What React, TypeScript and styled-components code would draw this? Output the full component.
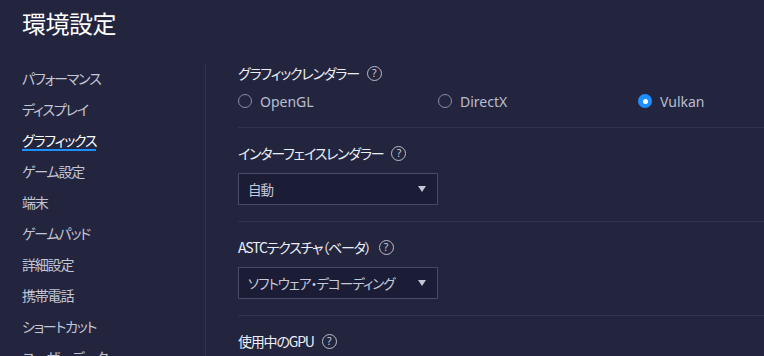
import React from "react";
import styled, { createGlobalStyle } from "styled-components";

const Global = createGlobalStyle`
  html, body { margin: 0; padding: 0; background: #23253f; overflow: hidden; }
  body { font-family: "Noto Sans", "Noto Sans CJK JP", sans-serif; font-feature-settings: "palt"; }
  * { box-sizing: border-box; }
`;

const Page = styled.div`
  width: 764px;
  height: 356px;
  background: #23253f;
  display: flex;
  flex-direction: column;
  overflow: hidden;
`;

const Header = styled.header`
  padding: 7px 22px 16px;
  height: 55px;
`;

const Title = styled.h1`
  margin: 0;
  font-size: 24px;
  line-height: 32px;
  font-weight: 400;
  color: #ffffff;
  letter-spacing: -0.5px;
  font-family: "Noto Sans CJK JP", sans-serif;
`;

const Body = styled.div`
  display: flex;
  flex: 1;
  margin-top: 8px;
  min-height: 0;
`;

const Sidebar = styled.nav`
  width: 206px;
  flex: 0 0 206px;
  border-right: 1px solid #2f3250;
  padding-left: 22px;
  display: flex;
  flex-direction: column;
`;

const NavItem = styled.div<{ $active?: boolean }>`
  height: 31px;
  flex: 0 0 31px;
  display: flex;
  align-items: center;
  font-size: 14px;
  letter-spacing: -1.2px;
  color: ${(p) => (p.$active ? "#ffffff" : "#c3c6d4")};
  font-family: "Noto Sans CJK JP", sans-serif;
`;

const NavLabel = styled.span<{ $active?: boolean }>`
  line-height: 17px;
  border-bottom: 2px solid ${(p) => (p.$active ? "#1e8fff" : "transparent")};
  margin-top: 2px;
`;

const Content = styled.main`
  flex: 1;
  padding: 0 6px 0 32px;
  display: flex;
  flex-direction: column;
`;

const Section = styled.section<{ $first?: boolean; $last?: boolean }>`
  padding: ${(p) => (p.$first ? "0" : "15px")} 0 16px;
  border-bottom: 1px solid ${(p) => (p.$last ? "transparent" : "#30334f")};
  display: flex;
  flex-direction: column;
  gap: ${(p) => (p.$first ? "8px" : "10px")};
`;

const SectionTitle = styled.div`
  display: flex;
  align-items: center;
  gap: 8px;
  font-size: 14px;
  line-height: 20px;
  color: #eceef5;
  letter-spacing: -1.2px;
  font-family: "Noto Sans CJK JP", sans-serif;
`;

const Help = styled.span`
  width: 15px;
  height: 15px;
  border-radius: 50%;
  border: 1.3px solid #b9bccb;
  color: #c9ccd8;
  font-size: 10.5px;
  line-height: 12px;
  letter-spacing: 0;
  display: inline-flex;
  align-items: center;
  justify-content: center;
  font-family: "Noto Sans", sans-serif;
`;

const RadioRow = styled.div`
  display: flex;
  height: 20px;
`;

const RadioOption = styled.label`
  flex: 0 0 200px;
  display: flex;
  align-items: center;
  gap: 8px;
  font-size: 14px;
  color: #b9bdcf;
  font-family: "Noto Sans", sans-serif;
`;

const RadioDot = styled.span<{ $checked?: boolean }>`
  width: 14px;
  height: 14px;
  border-radius: 50%;
  border: ${(p) => (p.$checked ? "none" : "1.5px solid #8a8ea5")};
  background: ${(p) => (p.$checked ? "#1e8fff" : "transparent")};
  display: inline-flex;
  align-items: center;
  justify-content: center;
  &::after {
    content: "";
    display: ${(p) => (p.$checked ? "block" : "none")};
    width: 5px;
    height: 5px;
    border-radius: 50%;
    background: #ffffff;
  }
`;

const Select = styled.div`
  width: 200px;
  height: 32px;
  background: #1b1d37;
  border: 1px solid #474a69;
  display: flex;
  align-items: center;
  justify-content: space-between;
  padding: 0 11px 0 9px;
  font-size: 13.5px;
  letter-spacing: -1px;
  color: #c6c9d7;
  font-family: "Noto Sans CJK JP", sans-serif;
`;

const Caret = styled.span`
  width: 0;
  height: 0;
  border-left: 4.5px solid transparent;
  border-right: 4.5px solid transparent;
  border-top: 6px solid #c3c6d4;
`;

const GpuText = styled.div`
  font-size: 13px;
  line-height: 18px;
  color: #7b7f98;
  font-family: "Noto Sans", sans-serif;
  margin-top: -2px;
`;

const navItems = [
  "パフォーマンス",
  "ディスプレイ",
  "グラフィックス",
  "ゲーム設定",
  "端末",
  "ゲームパッド",
  "詳細設定",
  "携帯電話",
  "ショートカット",
  "ユーザーデータ",
];

export default function App() {
  return (
    <Page>
      <Global />
      <Header>
        <Title>環境設定</Title>
      </Header>
      <Body>
        <Sidebar>
          {navItems.map((n) => (
            <NavItem key={n} $active={n === "グラフィックス"}>
              <NavLabel $active={n === "グラフィックス"}>{n}</NavLabel>
            </NavItem>
          ))}
        </Sidebar>
        <Content>
          <Section $first>
            <SectionTitle>
              グラフィックレンダラー<Help>?</Help>
            </SectionTitle>
            <RadioRow>
              <RadioOption>
                <RadioDot />
                OpenGL
              </RadioOption>
              <RadioOption>
                <RadioDot />
                DirectX
              </RadioOption>
              <RadioOption>
                <RadioDot $checked />
                Vulkan
              </RadioOption>
            </RadioRow>
          </Section>
          <Section>
            <SectionTitle>
              インターフェイスレンダラー<Help>?</Help>
            </SectionTitle>
            <Select>
              <span>自動</span>
              <Caret />
            </Select>
          </Section>
          <Section>
            <SectionTitle>
              ASTCテクスチャ（ベータ）<Help>?</Help>
            </SectionTitle>
            <Select>
              <span>ソフトウェア・デコーディング</span>
              <Caret />
            </Select>
          </Section>
          <Section $last>
            <SectionTitle>
              使用中のGPU<Help>?</Help>
            </SectionTitle>
            <GpuText>NVIDIA GeForce RTX 3050 SUPER/PCIe/SSE2</GpuText>
          </Section>
        </Content>
      </Body>
    </Page>
  );
}
